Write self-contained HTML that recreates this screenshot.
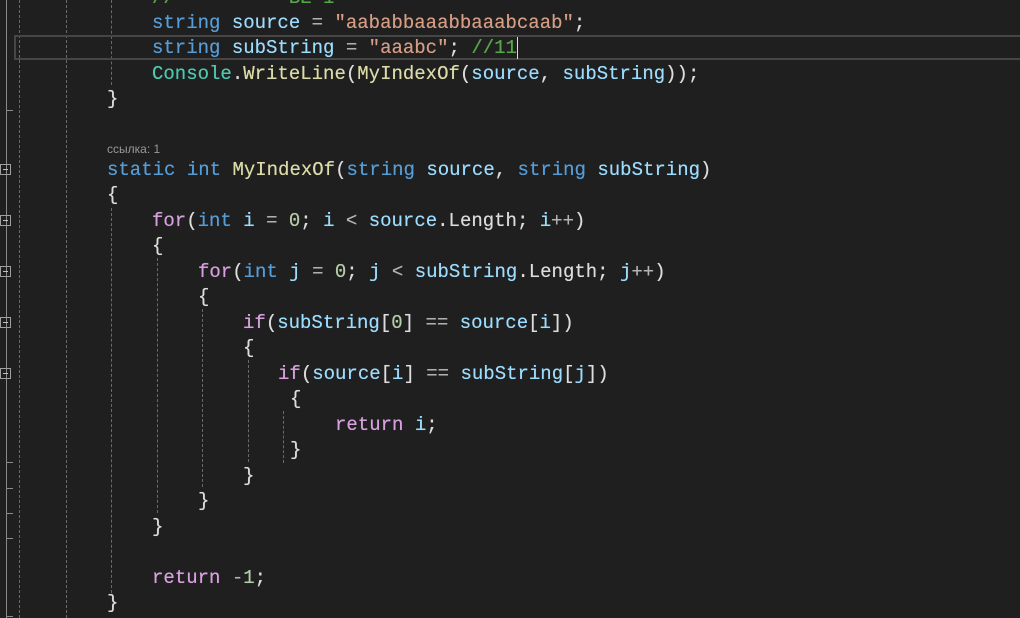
<!DOCTYPE html>
<html><head><meta charset="utf-8"><style>
body{margin:0;width:1020px;height:618px;background:#1f1f1f;overflow:hidden;position:relative;font-family:"Liberation Mono",monospace;font-size:19px;letter-spacing:0;color:#dcdcdc}
.l{position:absolute;white-space:pre;line-height:25px;height:25px;text-shadow:0 0 0.4px currentColor}
.k{color:#569cd6}.v{color:#9cdcfe}.m{color:#dcdcaa}.p{color:#d8a0df}.s{color:#d69d85}.n{color:#b5cea8}.c{color:#57a64a}.t{color:#4ec9b0}.o{color:#b4b4b4}
.g{position:absolute;width:0;border-left:1px dashed #6a6a6a}
.box{position:absolute;left:0;width:11px;height:11px;border:1px solid #a0a0a0;box-sizing:border-box}
.box:after{content:"";position:absolute;left:2px;top:4px;width:5px;height:1px;background:#c0c0c0}
.tk{position:absolute;left:6px;width:7px;height:1px;background:#8a8a8a}
</style></head><body>
<div style="position:absolute;left:6px;top:0;width:1px;height:618px;background:#8a8a8a"></div>
<div class="tk" style="top:110px"></div><div class="tk" style="top:462px"></div><div class="tk" style="top:488px"></div><div class="tk" style="top:513px"></div><div class="tk" style="top:538px"></div><div class="tk" style="top:616px"></div>
<div class="box" style="top:164px"></div><div class="box" style="top:215px"></div><div class="box" style="top:266px"></div><div class="box" style="top:317px"></div><div class="box" style="top:368px"></div>
<div class="g" style="left:19px;top:0;height:618px"></div>
<div class="g" style="left:66px;top:0;height:618px"></div>
<div class="g" style="left:111px;top:0;height:85px"></div>
<div class="g" style="left:111px;top:208px;height:385px"></div>
<div class="g" style="left:157px;top:258px;height:255px"></div>
<div class="g" style="left:202px;top:309px;height:178px"></div>
<div class="g" style="left:248px;top:360px;height:102px"></div>
<div class="g" style="left:283px;top:411px;height:52px"></div>
<div style="position:absolute;left:14px;top:35px;width:1010px;height:25px;border:2px solid #464646;box-sizing:border-box"></div>

<div class="l" style="left:152px;top:-14px"><span class="c">//        - BE-1</span></div>
<div class="l" style="left:152px;top:11px"><span class="k">string</span> <span class="v">source</span> <span class="o">=</span> <span class="s">"aababbaaabbaaabcaab"</span>;</div>
<div class="l" style="left:152px;top:36px"><span class="k">string</span> <span class="v">subString</span> <span class="o">=</span> <span class="s">"aaabc"</span>; <span class="c">//11</span><span style="display:inline-block;width:1px;height:22px;background:#ddd;vertical-align:middle"></span></div>
<div class="l" style="left:152px;top:62px"><span class="t">Console</span>.<span class="m">WriteLine</span>(<span class="m">MyIndexOf</span>(<span class="v">source</span>, <span class="v">subString</span>));</div>
<div class="l" style="left:107px;top:87px">}</div>
<div class="l" style="left:107px;top:139px;font-family:'Liberation Sans',sans-serif;font-size:12px;letter-spacing:0;color:#999;line-height:20px;text-shadow:none">ссылка: 1</div>
<div class="l" style="left:107px;top:158px"><span class="k">static</span> <span class="k">int</span> <span class="m">MyIndexOf</span>(<span class="k">string</span> <span class="v">source</span>, <span class="k">string</span> <span class="v">subString</span>)</div>
<div class="l" style="left:107px;top:183px">{</div>
<div class="l" style="left:152px;top:209px"><span class="p">for</span>(<span class="k">int</span> <span class="v">i</span> <span class="o">=</span> <span class="n">0</span>; <span class="v">i</span> <span class="o">&lt;</span> <span class="v">source</span>.Length; <span class="v">i</span><span class="o">++</span>)</div>
<div class="l" style="left:152px;top:234px">{</div>
<div class="l" style="left:198px;top:260px"><span class="p">for</span>(<span class="k">int</span> <span class="v">j</span> <span class="o">=</span> <span class="n">0</span>; <span class="v">j</span> <span class="o">&lt;</span> <span class="v">subString</span>.Length; <span class="v">j</span><span class="o">++</span>)</div>
<div class="l" style="left:198px;top:285px">{</div>
<div class="l" style="left:243px;top:311px"><span class="p">if</span>(<span class="v">subString</span>[<span class="n">0</span>] <span class="o">==</span> <span class="v">source</span>[<span class="v">i</span>])</div>
<div class="l" style="left:243px;top:336px">{</div>
<div class="l" style="left:278px;top:362px"><span class="p">if</span>(<span class="v">source</span>[<span class="v">i</span>] <span class="o">==</span> <span class="v">subString</span>[<span class="v">j</span>])</div>
<div class="l" style="left:290px;top:387px">{</div>
<div class="l" style="left:335px;top:413px"><span class="p">return</span> <span class="v">i</span>;</div>
<div class="l" style="left:290px;top:438px">}</div>
<div class="l" style="left:243px;top:464px">}</div>
<div class="l" style="left:198px;top:489px">}</div>
<div class="l" style="left:152px;top:515px">}</div>
<div class="l" style="left:152px;top:566px"><span class="p">return</span> <span class="o">-</span><span class="n">1</span>;</div>
<div class="l" style="left:107px;top:591px">}</div>
</body></html>
